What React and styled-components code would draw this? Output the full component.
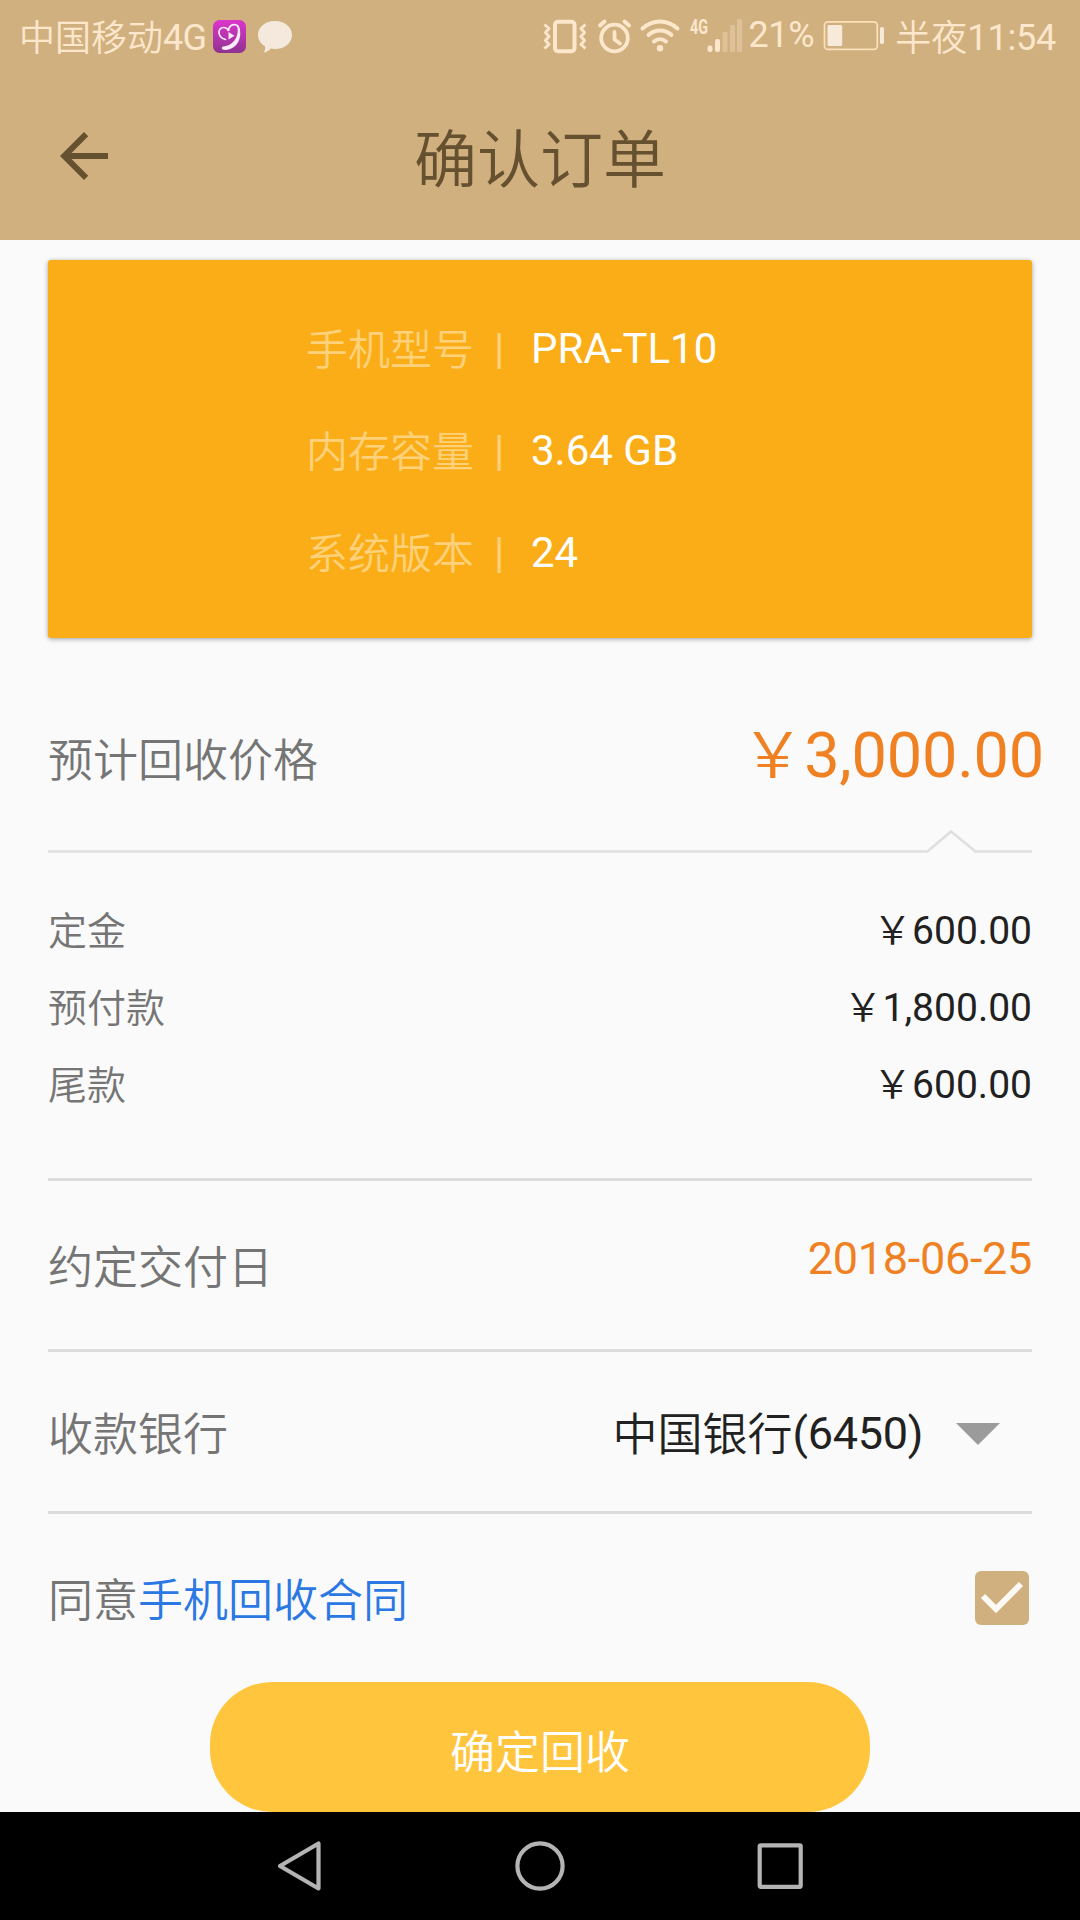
import React from "react";
import styled, { createGlobalStyle } from "styled-components";

const GlobalStyle = createGlobalStyle`
  * { box-sizing: border-box; }
  body {
    margin: 0;
    background: #fafafa;
    font-family: Roboto, "Noto Sans CJK SC", sans-serif;
  }
`;

const Screen = styled.div`
  display: flex;
  flex-direction: column;
  width: 1080px;
  height: 1920px;
  overflow: hidden;
  background: #fafafa;
`;

const Header = styled.header`
  display: flex;
  flex-direction: column;
  height: 240px;
  background: #d1b07f;
`;

const StatusBar = styled.div`
  display: flex;
  align-items: flex-start;
  justify-content: space-between;
  height: 72px;
  padding: 0 24px 0 19px;
  color: #fce7cd;
`;

const StatusGroup = styled.div`
  display: flex;
  align-items: flex-start;
`;

const StatusText = styled.span`
  padding-top: ${(p) => p.$top || 0}px;
  margin-left: ${(p) => p.$gap || 0}px;
  font-size: 36px;
  font-weight: ${(p) => p.$weight || 400};
  line-height: 42px;
  letter-spacing: ${(p) => p.$spacing || 0}px;
  white-space: nowrap;
`;

const Latin = styled.span`
  font-weight: 400;
  letter-spacing: ${(p) => p.$spacing || 0}px;
  vertical-align: ${(p) => p.$raise || 0}px;
`;

const StatusIcon = styled.svg`
  display: block;
  flex: none;
  height: 72px;
  width: ${(p) => p.$width}px;
  margin-left: ${(p) => p.$gap || 0}px;
`;

const AppBar = styled.div`
  display: grid;
  grid-template-columns: 120px 1fr 120px;
  height: 168px;
  padding: 0;
`;

const BackButton = styled.button`
  width: 72px;
  height: 72px;
  margin: 48px 0 0 48px;
  padding: 0;
  border: 0;
  background: none;
  color: #65502f;
`;

const Title = styled.h1`
  margin: 0;
  padding-top: 52px;
  font-size: 63px;
  font-weight: 350;
  line-height: 74px;
  text-align: center;
  color: #65502f;
`;

const Content = styled.main`
  display: flex;
  flex-direction: column;
  height: 1572px;
  padding: 20px 48px 0;
`;

const DeviceCard = styled.section`
  flex: none;
  height: 378px;
  padding: 38px 0 0 258px;
  border-radius: 3px;
  background: #fbad17;
  box-shadow: 0 1px 5px rgba(0, 0, 0, 0.36);
`;

const SpecRow = styled.div`
  display: grid;
  grid-template-columns: 188px 37px auto;
  height: 102px;
  align-items: center;
  font-size: 42px;
  line-height: 50px;
  color: #fff;
`;

const SpecLabel = styled.span`
  padding-top: 3px;
  font-weight: 350;
  color: #fed17a;
`;

const SpecDivider = styled.span`
  color: #fed17a;
`;

const Row = styled.div`
  display: flex;
  flex: none;
  justify-content: space-between;
  align-items: flex-start;
  height: ${(p) => p.$height}px;
`;

const Label = styled.span`
  padding-top: ${(p) => p.$top || 0}px;
  font-size: ${(p) => p.$size || 45}px;
  font-weight: 350;
  line-height: 53px;
  color: #757575;
`;

const Price = styled.span`
  padding-top: 81px;
  margin-right: -12px;
  font-size: 63px;
  line-height: 74px;
  letter-spacing: -0.2px;
  color: #ef8122;
`;

const Yuan = styled.span`
  font-weight: 350;
`;

const NotchLine = styled.svg`
  display: block;
  flex: none;
  width: 984px;
  height: 24px;
`;

const Breakdown = styled.div`
  flex: none;
  height: 325px;
  padding-top: 52px;
`;

const Amount = styled.span`
  font-size: 39px;
  line-height: 53px;
  color: #212121;
`;

const Divider = styled.div`
  flex: none;
  height: 3px;
  background: #dcdcdc;
`;

const DateValue = styled.span`
  padding-top: 51px;
  font-size: 45px;
  line-height: 53px;
  letter-spacing: -0.3px;
  color: #ef8122;
`;

const BankSelect = styled.div`
  display: flex;
  align-items: center;
  gap: 33px;
  padding: 55px 32px 0 0;
  font-size: 45px;
  font-weight: 350;
  line-height: 53px;
  color: #212121;
`;

const DropdownArrow = styled.svg`
  width: 44px;
  height: 22px;
  margin-bottom: 2px;
  fill: #9b9b9b;
`;

const Link = styled.a`
  color: #2b78e4;
`;

const CheckIcon = styled.svg`
  display: block;
  width: 54px;
  height: 54px;
  margin: 57px 3px 0 0;
`;

const SubmitButton = styled.button`
  flex: none;
  align-self: center;
  width: 660px;
  height: 130px;
  padding: 12px 0 0;
  border: 0;
  border-radius: 62px;
  background: #ffc53d;
  font-family: Roboto, "Noto Sans CJK SC", sans-serif;
  font-size: 45px;
  font-weight: 350;
  line-height: 53px;
  color: #fff;
`;

const NavBar = styled.nav`
  display: flex;
  flex: none;
  align-items: center;
  justify-content: space-between;
  height: 108px;
  padding: 0 270px;
  background: #000;
`;

const NavIcon = styled.svg`
  display: block;
  width: 60px;
  height: 60px;
  fill: none;
  stroke: #b4b4b4;
  stroke-width: 4.2;
  stroke-linejoin: round;
`;

const specs = [
  ["手机型号", "PRA-TL10"],
  ["内存容量", "3.64 GB"],
  ["系统版本", "24"],
];

const payments = [
  ["定金", "600.00"],
  ["预付款", "1,800.00"],
  ["尾款", "600.00"],
];

function PlayerBadge() {
  return (
    <StatusIcon $width={33} $gap={7} viewBox="0 0 33 72">
      <defs>
        <linearGradient id="badge" x1="0" y1="0" x2="0" y2="1">
          <stop offset="0" stopColor="#dd35cc" />
          <stop offset="1" stopColor="#8f3290" />
        </linearGradient>
      </defs>
      <rect x="0" y="20" width="33" height="33" rx="6.5" fill="url(#badge)" />
      <path
        d="M12.500 39.500C8 38.500 5.500 35 6 31.500C7 26.500 13.500 26 15.500 31C15.500 26 20 23.500 23.500 25C27 27 26.500 33 24.500 38"
        fill="none"
        stroke="#fbeafa"
        strokeWidth="1.700"
        strokeLinecap="round"
      />
      <path d="M24 25C31 31 27 51.500 10 49.800C8.500 49 8.500 47 10 46.500C21 46 27 35 24 25Z" fill="#fbeafa" />
      <path d="M15.500 32L21.500 35.700L15.500 39.500Z" fill="#fbeafa" />
    </StatusIcon>
  );
}

function ChatBubble() {
  return (
    <StatusIcon $width={34} $gap={12} viewBox="0 0 34 72">
      <path
        d="M17 21C26.500 21 34 27 34 35C34 43 26.500 49 17 49C15.500 49 14 48.900 12.800 48.600C11 50.500 8.500 52.500 5.700 52.600C7.200 50.500 7.300 48.500 7 46.300C2.500 43.500 0 39.500 0 35C0 27 7.500 21 17 21Z"
        fill="#f4e9dc"
      />
    </StatusIcon>
  );
}

function SystemIcons() {
  return (
    <StatusIcon $width={204} viewBox="540 0 204 72" fill="none" stroke="currentColor">
      <rect x="555" y="21.800" width="19.500" height="29.400" rx="3" strokeWidth="4" />
      <path
        d="M544.500 24.500L549 28.500L545.500 32.500L549 36.500L545.500 40.500L549 44.500L544.500 48.500M585.500 24.500L581 28.500L584.500 32.500L581 36.500L584.500 40.500L581 44.500L585.500 48.500"
        strokeWidth="3"
        strokeLinejoin="round"
      />
      <circle cx="614.500" cy="38" r="13.300" strokeWidth="3.800" />
      <path d="M614.500 32V39.500L620 43.500" strokeWidth="3.800" strokeLinejoin="round" strokeLinecap="round" />
      <path d="M600 25.500L604.500 21.500M629 25.500L624.500 21.500" strokeWidth="4" strokeLinecap="round" />
      <path
        d="M642.500 28.500C652.500 19 667.500 19 677.500 28.500M648.500 35C655 29 665 29 671.500 35M654 41.500C657.500 38.500 662.500 38.500 666 41.500"
        strokeWidth="4"
        strokeLinecap="round"
      />
      <circle cx="660" cy="48.200" r="3.200" fill="currentColor" stroke="none" />
      <text
        x="690"
        y="34"
        fontFamily="Roboto, sans-serif"
        fontSize="20"
        fontWeight="700"
        fill="currentColor"
        stroke="none"
        textLength="18"
        lengthAdjust="spacingAndGlyphs"
      >
        4G
      </text>
      <g fill="currentColor" stroke="none">
        <rect x="707.500" y="45.500" width="5" height="6.500" rx="2.200" />
        <rect x="715" y="39" width="5" height="13" rx="2" />
        <g opacity="0.32">
          <rect x="722.500" y="32" width="5" height="20" rx="1" />
          <rect x="730" y="25" width="5" height="27" rx="1" />
          <rect x="737" y="19" width="5" height="33" rx="1" />
        </g>
      </g>
    </StatusIcon>
  );
}

function Battery() {
  return (
    <StatusIcon $width={61} $gap={9} viewBox="823 0 61 72">
      <rect x="824.500" y="21.800" width="52.800" height="27.600" rx="3.500" fill="none" stroke="#fce0ba" strokeWidth="1.700" />
      <rect x="827.500" y="25" width="14.700" height="21" rx="1.500" fill="#f8eadb" />
      <rect x="880" y="27" width="4" height="17" rx="1.800" fill="#f8eadb" />
    </StatusIcon>
  );
}

export default function App() {
  return (
    <Screen lang="zh-CN">
      <GlobalStyle />
      <Header>
        <StatusBar>
          <StatusGroup>
            <StatusText $top={17} $weight={350}>
              中国移动<Latin $raise={1} $spacing={-0.7}>4G</Latin>
            </StatusText>
            <PlayerBadge />
            <ChatBubble />
          </StatusGroup>
          <StatusGroup>
            <SystemIcons />
            <StatusText $top={14} $gap={4} $spacing={-0.3}>21%</StatusText>
            <Battery />
            <StatusText $top={17} $gap={11} $weight={350}>
              半夜<Latin $raise={1} $spacing={-0.2}>11:54</Latin>
            </StatusText>
          </StatusGroup>
        </StatusBar>
        <AppBar>
          <BackButton aria-label="返回">
            <svg width="72" height="72" viewBox="0 0 24 24" fill="currentColor">
              <path d="M20 11H7.830l5.590-5.590L12 4l-8 8 8 8 1.410-1.410L7.830 13H20v-2z" />
            </svg>
          </BackButton>
          <Title>确认订单</Title>
        </AppBar>
      </Header>
      <Content>
        <DeviceCard>
          {specs.map(([name, value]) => (
            <SpecRow key={name}>
              <SpecLabel>{name}</SpecLabel>
              <SpecDivider>|</SpecDivider>
              <span>{value}</span>
            </SpecRow>
          ))}
        </DeviceCard>
        <Row $height={191}>
          <Label $top={97}>预计回收价格</Label>
          <Price>
            <Yuan>￥</Yuan>3,000.00
          </Price>
        </Row>
        <NotchLine viewBox="0 0 984 24" fill="none" stroke="#dfdfdf" strokeWidth="2.600">
          <path d="M0 22.500H879.500L903 2.500L927.500 22.500H984" />
        </NotchLine>
        <Breakdown>
          {payments.map(([name, value]) => (
            <Row key={name} $height={77}>
              <Label $size={39} $top={1}>{name}</Label>
              <Amount>
                <Yuan>￥</Yuan>
                {value}
              </Amount>
            </Row>
          ))}
        </Breakdown>
        <Divider />
        <Row $height={168}>
          <Label $top={61}>约定交付日</Label>
          <DateValue>2018-06-25</DateValue>
        </Row>
        <Divider />
        <Row $height={159}>
          <Label $top={57}>收款银行</Label>
          <BankSelect>
            <span>
              中国银行<Latin $raise={2} $spacing={-0.3}>(6450)</Latin>
            </span>
            <DropdownArrow viewBox="0 0 44 22">
              <path d="M0 0H44L22 22Z" />
            </DropdownArrow>
          </BankSelect>
        </Row>
        <Divider />
        <Row $height={168}>
          <Label $top={61}>
            同意<Link>手机回收合同</Link>
          </Label>
          <CheckIcon viewBox="0 0 54 54">
            <rect width="54" height="54" rx="6" fill="#cfb07e" />
            <path d="M8 25L21 38L46 13" fill="none" stroke="#fdfaf6" strokeWidth="6" />
          </CheckIcon>
        </Row>
        <SubmitButton>确定回收</SubmitButton>
      </Content>
      <NavBar>
        <NavIcon viewBox="0 0 60 60">
          <path d="M10 30L48.500 7.500V52.500Z" />
        </NavIcon>
        <NavIcon viewBox="0 0 60 60">
          <circle cx="30" cy="30" r="22.600" />
        </NavIcon>
        <NavIcon viewBox="0 0 60 60">
          <rect x="9.700" y="9.300" width="41" height="41.500" rx="1" />
        </NavIcon>
      </NavBar>
    </Screen>
  );
}
